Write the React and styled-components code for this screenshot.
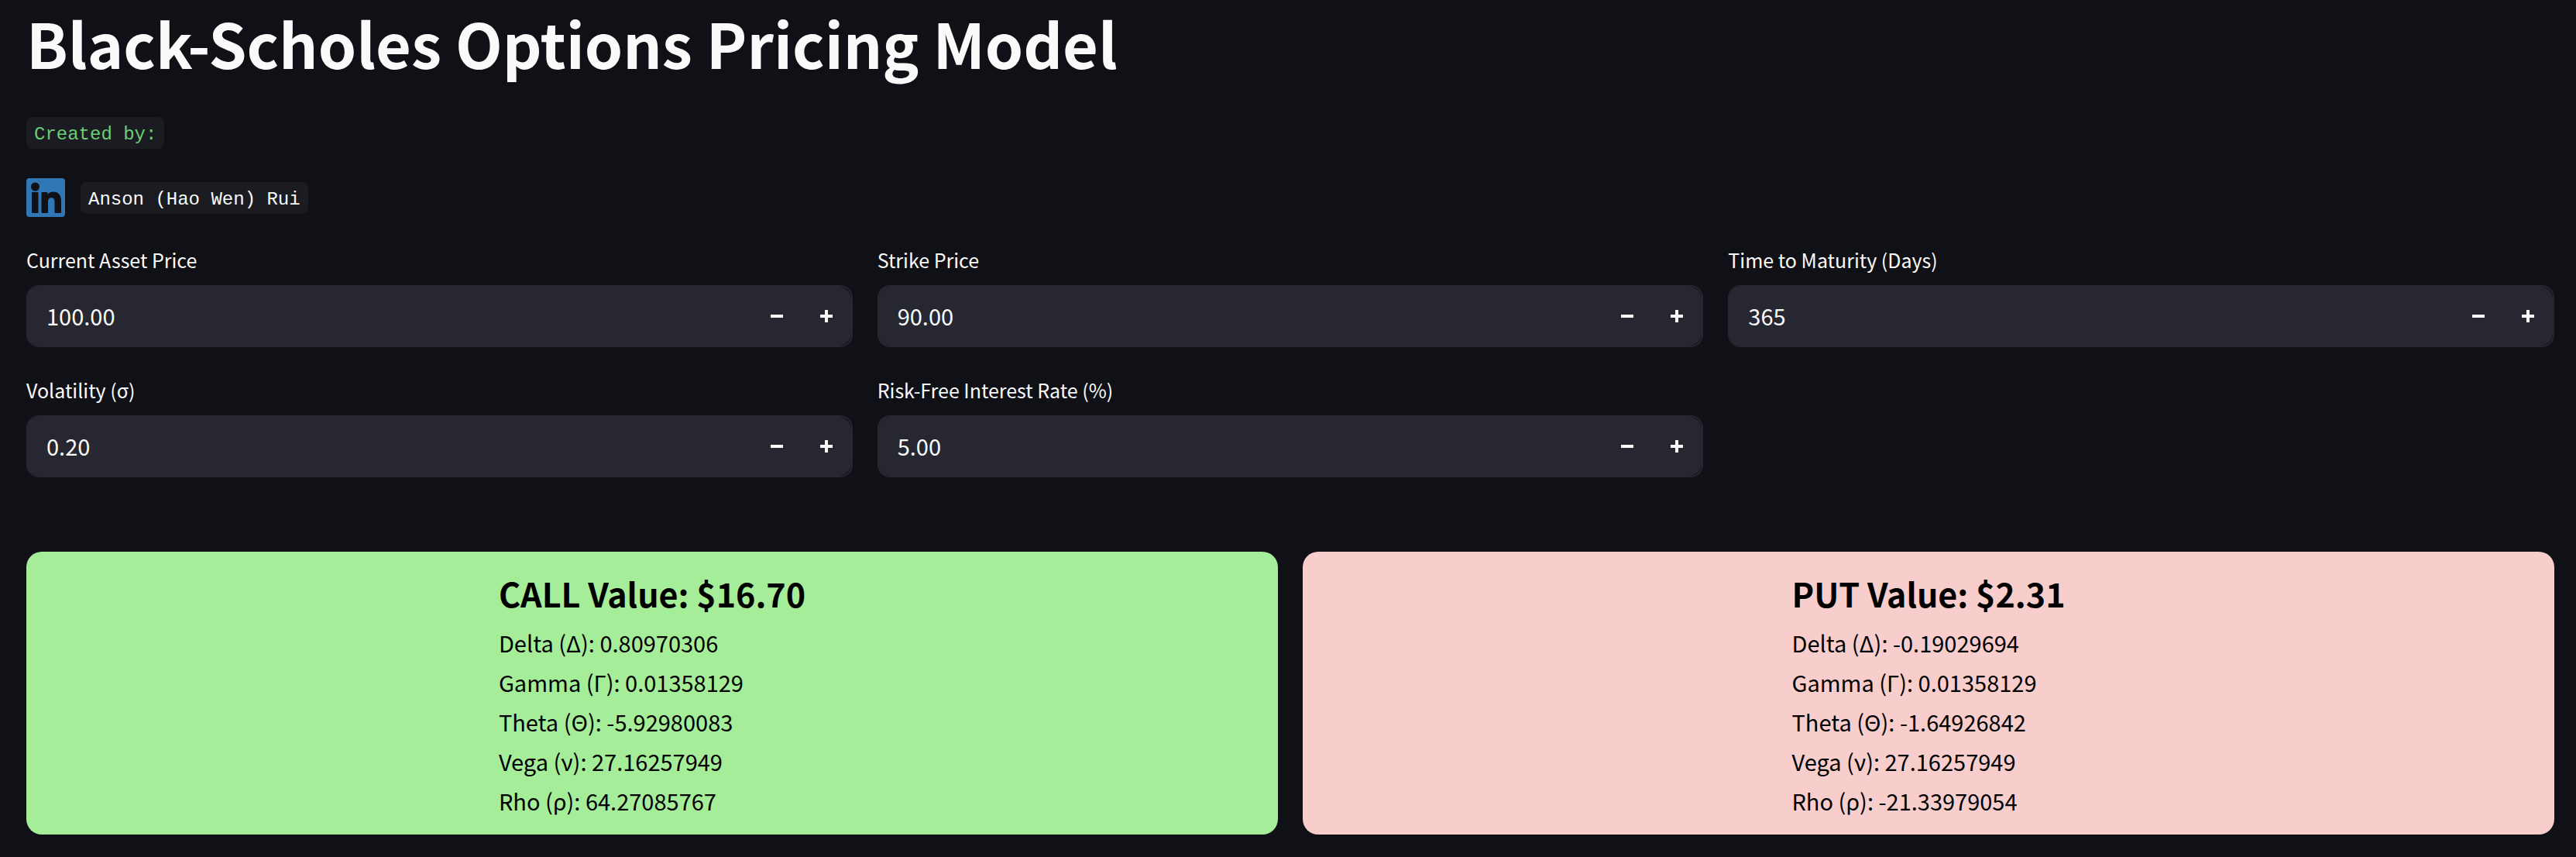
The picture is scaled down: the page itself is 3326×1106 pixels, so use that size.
import React, { useId, useState } from "react";
import styled, { createGlobalStyle } from "styled-components";

const sans = `"Noto Sans CJK SC", "Noto Sans", sans-serif`;
const mono = `"Liberation Mono", "DejaVu Sans Mono", monospace`;

const GlobalStyle = createGlobalStyle`
  *, *::before, *::after { box-sizing: border-box; }
  body {
    margin: 0;
    background: #101116;
    color: #fafafa;
    font-family: ${sans};
  }
`;

const Page = styled.main`
  padding: 8px 28px 28px 34px;
`;

const Title = styled.h1`
  margin: 0;
  font-size: 79px;
  line-height: 94px;
  font-weight: 700;
`;

const Credits = styled.section`
  display: flex;
  flex-direction: column;
  align-items: flex-start;
  gap: 38px;
  margin-top: 49px;
`;

const Chip = styled.code`
  padding: 4px 10px 0;
  border-radius: 8px;
  background: #1a1c22;
  color: ${(p) => (p.$accent ? "#6ccd76" : "#fafafa")};
  font-family: ${mono};
  font-size: 24px;
  font-weight: 400;
  line-height: 37px;
`;

const AuthorLink = styled.a`
  display: flex;
  align-items: center;
  gap: 20px;
  text-decoration: none;
`;

const Logo = styled.svg`
  display: block;
  width: 50px;
  height: 50px;
  fill: #3277b5;
`;

const Fields = styled.form`
  display: grid;
  grid-template-columns: repeat(3, 1fr);
  gap: 32px;
  margin-top: 32px;
`;

const Field = styled.div`
  display: flex;
  flex-direction: column;
  gap: 10px;
`;

const Label = styled.label`
  font-size: 25px;
  line-height: 46px;
`;

const Stepper = styled.div`
  display: flex;
  height: 80px;
  border: 2px solid #262730;
  border-radius: 16px;
  overflow: hidden;
`;

const NumberInput = styled.input`
  flex: 1;
  min-width: 0;
  padding: 0 24px 2px;
  border: 0;
  outline: 0;
  background: #262730;
  color: #fafafa;
  font-family: ${sans};
  font-size: 29px;
`;

const StepButton = styled.button`
  display: flex;
  align-items: center;
  justify-content: center;
  width: 64px;
  padding: 0;
  border: 0;
  border-radius: ${(p) => (p.$last ? "0 16px 16px 0" : "0")};
  background: #262730;
  color: #fafafa;
  cursor: pointer;

  svg {
    width: 16px;
    height: 16px;
    fill: currentColor;
  }
`;

const Results = styled.section`
  display: grid;
  grid-template-columns: 1fr 1fr;
  gap: 32px;
  margin-top: 96px;
`;

const Card = styled.article`
  display: flex;
  justify-content: center;
  padding: 20px 20px 18px;
  border-radius: 20px;
  background: ${(p) => p.$tone};
  color: #000;
`;

const CardTitle = styled.h2`
  margin: 0 0 6px;
  font-size: 43px;
  line-height: 66px;
  font-weight: 700;
`;

const Greek = styled.p`
  margin: 0;
  font-size: 29px;
  line-height: 51px;
`;

const fields = [
  { label: "Current Asset Price", value: 100, step: 0.01, digits: 2 },
  { label: "Strike Price", value: 90, step: 0.01, digits: 2 },
  { label: "Time to Maturity (Days)", value: 365, step: 1, digits: 0 },
  { label: "Volatility (σ)", value: 0.2, step: 0.01, digits: 2 },
  { label: "Risk-Free Interest Rate (%)", value: 5, step: 0.01, digits: 2 },
];

const results = [
  {
    title: "CALL Value: $16.70",
    tone: "#a6ed9a",
    greeks: [
      "Delta (Δ): 0.80970306",
      "Gamma (Γ): 0.01358129",
      "Theta (Θ): -5.92980083",
      "Vega (ν): 27.16257949",
      "Rho (ρ): 64.27085767",
    ],
  },
  {
    title: "PUT Value: $2.31",
    tone: "#f7cecc",
    greeks: [
      "Delta (Δ): -0.19029694",
      "Gamma (Γ): 0.01358129",
      "Theta (Θ): -1.64926842",
      "Vega (ν): 27.16257949",
      "Rho (ρ): -21.33979054",
    ],
  },
];

function NumberField({ label, value, step, digits }) {
  const id = useId();
  const [text, setText] = useState(value.toFixed(digits));
  const nudge = (by) => setText(((parseFloat(text) || 0) + by).toFixed(digits));

  return (
    <Field>
      <Label htmlFor={id}>{label}</Label>
      <Stepper>
        <NumberInput
          id={id}
          inputMode="decimal"
          value={text}
          onChange={(e) => setText(e.target.value)}
        />
        <StepButton type="button" aria-label={`Decrease ${label}`} onClick={() => nudge(-step)}>
          <svg viewBox="0 0 16 16" aria-hidden="true">
            <path d="M0 6h16v4H0z" />
          </svg>
        </StepButton>
        <StepButton type="button" $last aria-label={`Increase ${label}`} onClick={() => nudge(step)}>
          <svg viewBox="0 0 16 16" aria-hidden="true">
            <path d="M6 0h4v6h6v4h-6v6H6v-6H0V6h6z" />
          </svg>
        </StepButton>
      </Stepper>
    </Field>
  );
}

export default function App() {
  return (
    <>
      <GlobalStyle />
      <Page>
        <Title>Black-Scholes Options Pricing Model</Title>
        <Credits>
          <Chip $accent>Created by:</Chip>
          <AuthorLink href="#author">
            <Logo viewBox="0 0 50 50" aria-hidden="true">
              <path
                fillRule="evenodd"
                d="M4 0h42a4 4 0 0 1 4 4v42a4 4 0 0 1-4 4H4a4 4 0 0 1-4-4V4a4 4 0 0 1 4-4zM11.500 5.500a5.500 5.500 0 1 0 0 11a5.500 5.500 0 1 0 0-11zM8 18a1 1 0 0 0-1 1v25a1 1 0 0 0 1 1h6.500a1 1 0 0 0 1-1V19a1 1 0 0 0-1-1zM20.500 18a1 1 0 0 0-1 1v25a1 1 0 0 0 1 1h6.500a1 1 0 0 0 1-1V31c0-3.800 1.200-5.800 4.300-5.800s4.200 2 4.200 5.800v13a1 1 0 0 0 1 1h6.500a1 1 0 0 0 1-1V29.500c0-7.500-3.500-11.900-10.200-11.900c-3.400 0-6 1.400-7.300 3.600V19a1 1 0 0 0-1-1z"
              />
            </Logo>
            <Chip>Anson (Hao Wen) Rui</Chip>
          </AuthorLink>
        </Credits>
        <Fields>
          {fields.map((f) => (
            <NumberField key={f.label} {...f} />
          ))}
        </Fields>
        <Results>
          {results.map((r) => (
            <Card key={r.title} $tone={r.tone}>
              <div>
                <CardTitle>{r.title}</CardTitle>
                {r.greeks.map((g) => (
                  <Greek key={g}>{g}</Greek>
                ))}
              </div>
            </Card>
          ))}
        </Results>
      </Page>
    </>
  );
}
